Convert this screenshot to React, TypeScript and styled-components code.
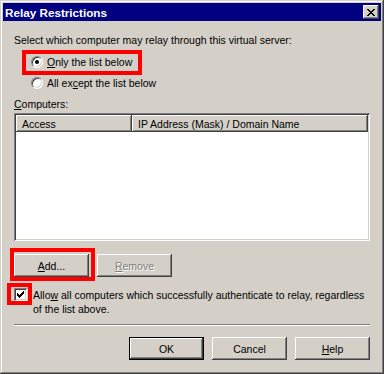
import React from 'react';
import styled, { createGlobalStyle, css } from 'styled-components';

const GlobalStyle = createGlobalStyle`
  html, body {
    margin: 0;
    padding: 0;
    background: #d4d0c8;
  }
  body {
    font-family: 'Liberation Sans', Arial, sans-serif;
    font-size: 10.5px;
    color: #000;
  }
`;

const raised = css`
  box-shadow: inset -1px -1px #404040, inset 1px 1px #fff, inset -2px -2px #808080, inset 2px 2px #d4d0c8;
`;

const Window = styled.div`
  position: relative;
  width: 384px;
  height: 374px;
  box-sizing: border-box;
  padding: 3px;
  background: #d4d0c8;
  box-shadow: inset -1px -1px #404040, inset 1px 1px #d4d0c8, inset -2px -2px #808080, inset 2px 2px #fff;
  display: flex;
  flex-direction: column;
`;

const TitleBar = styled.div`
  height: 18px;
  background: #000080;
  display: flex;
  align-items: center;
  justify-content: space-between;
  padding: 0 2px;
`;

const Title = styled.span`
  color: #fff;
  font-weight: bold;
  font-size: 11.7px;
  letter-spacing: 0;
`;

const CloseButton = styled.div`
  width: 16px;
  height: 14px;
  background: #d4d0c8;
  display: flex;
  align-items: center;
  justify-content: center;
  ${raised}
`;

const Content = styled.div`
  display: flex;
  flex-direction: column;
  padding: 0 11px;
`;

const Label = styled.div`
  line-height: 13px;
  margin-top: ${(p: { $mt: number }) => p.$mt}px;
  white-space: nowrap;
`;

const U = styled.span`
  text-decoration: underline;
  text-underline-offset: 1px;
`;

const RadioGroup = styled.div`
  display: flex;
  flex-direction: column;
  gap: 5px;
  margin: 7px 0 0 17px;
`;

const RadioRow = styled.div`
  position: relative;
  display: flex;
  align-items: center;
  gap: 4px;
  height: 16px;
  align-self: flex-start;
`;

const RadioCircle = styled.span`
  width: 12px;
  height: 12px;
  box-sizing: border-box;
  border-radius: 50%;
  border: 1px solid;
  border-color: #808080 #fff #fff #808080;
  background: #fff;
  box-shadow: inset 1px 1px 0 #404040, inset -1px -1px 0 #d4d0c8;
  display: flex;
  align-items: center;
  justify-content: center;
`;

const RadioDot = styled.span`
  width: 4px;
  height: 4px;
  border-radius: 50%;
  background: #000;
`;

const Highlight = styled.span<{ $l: number; $t: number; $w: number; $h: number }>`
  position: absolute;
  left: ${(p) => p.$l}px;
  top: ${(p) => p.$t}px;
  width: ${(p) => p.$w}px;
  height: ${(p) => p.$h}px;
  box-sizing: border-box;
  border: 4px solid #f00;
  pointer-events: none;
`;

const ListBox = styled.div`
  margin-top: 2px;
  height: 128px;
  background: #fff;
  box-sizing: border-box;
  padding: 2px;
  box-shadow: inset 1px 1px #808080, inset -1px -1px #fff, inset 2px 2px #404040, inset -2px -2px #d4d0c8;
`;

const HeaderRow = styled.div`
  display: flex;
  height: 17px;
`;

const HeaderCell = styled.div<{ $w?: number }>`
  ${(p) => (p.$w ? `width: ${p.$w}px;` : 'flex: 1;')}
  background: #d4d0c8;
  display: flex;
  align-items: center;
  padding-left: 6px;
  box-sizing: border-box;
  box-shadow: inset -1px -1px #404040, inset 1px 1px #fff, inset -2px -2px #808080;
`;

const ButtonRow = styled.div<{ $mt: number; $end?: boolean }>`
  display: flex;
  gap: 8px;
  margin-top: ${(p) => p.$mt}px;
  justify-content: ${(p) => (p.$end ? 'flex-end' : 'flex-start')};
`;

const Button = styled.div<{ $default?: boolean; $disabled?: boolean }>`
  position: relative;
  width: 75px;
  height: 23px;
  box-sizing: border-box;
  background: #d4d0c8;
  display: flex;
  align-items: center;
  justify-content: center;
  ${(p) =>
    p.$default
      ? 'box-shadow: inset 0 0 0 1px #000, inset -2px -2px #404040, inset 2px 2px #fff, inset -3px -3px #808080, inset 3px 3px #d4d0c8;'
      : 'box-shadow: inset -1px -1px #404040, inset 1px 1px #fff, inset -2px -2px #808080, inset 2px 2px #d4d0c8;'}
  color: ${(p) => (p.$disabled ? '#808080' : '#000')};
  text-shadow: ${(p) => (p.$disabled ? '1px 1px 0 #fff' : 'none')};
`;

const CheckRow = styled.div`
  position: relative;
  display: flex;
  align-items: flex-start;
  gap: 6px;
  margin-top: 11px;
`;

const CheckBox = styled.span`
  position: relative;
  flex: none;
  width: 13px;
  height: 13px;
  box-sizing: border-box;
  background: #fff;
  box-shadow: inset 1px 1px #808080, inset -1px -1px #fff, inset 2px 2px #404040, inset -2px -2px #d4d0c8;
  display: flex;
  align-items: center;
  justify-content: center;
`;

const CheckText = styled.div`
  line-height: 14px;
  white-space: nowrap;
`;

const Separator = styled.div`
  margin-top: 8px;
  height: 1px;
  background: #808080;
  border-bottom: 1px solid #fff;
`;

const AddWrap = styled.div`
  position: relative;
`;

const CloseGlyph = () => (
  <svg width="8" height="7" viewBox="0 0 8 7" shapeRendering="crispEdges">
    <path
      d="M0 0h2v1h-2zM6 0h2v1h-2zM1 1h2v1h-2zM5 1h2v1h-2zM2 2h4v1h-4zM3 3h2v1h-2zM2 4h4v1h-4zM1 5h2v1h-2zM5 5h2v1h-2zM0 6h2v1h-2zM6 6h2v1h-2z"
      fill="#000"
    />
  </svg>
);

const CheckGlyph = () => (
  <svg width="7" height="7" viewBox="0 0 7 7" shapeRendering="crispEdges">
    <path d="M6 0h1v1h-1zM5 1h2v1h-2zM0 2h1v1h-1zM4 2h3v1h-3zM0 3h2v1h-2zM3 3h3v1h-3zM0 4h5v1h-5zM1 5h3v1h-3zM2 6h1v1h-1z" fill="#000" />
  </svg>
);

const App = () => (
  <>
    <GlobalStyle />
    <Window>
      <TitleBar>
        <Title>Relay Restrictions</Title>
        <CloseButton>
          <CloseGlyph />
        </CloseButton>
      </TitleBar>
      <Content>
        <Label $mt={13}>Select which computer may relay through this virtual server:</Label>
        <RadioGroup>
          <RadioRow>
            <RadioCircle>
              <RadioDot />
            </RadioCircle>
            <span>
              <U>O</U>nly the list below
            </span>
            <Highlight $l={-9} $t={-4} $w={120} $h={25} />
          </RadioRow>
          <RadioRow>
            <RadioCircle />
            <span>
              All ex<U>c</U>ept the list below
            </span>
          </RadioRow>
        </RadioGroup>
        <Label $mt={7}>
          <U>C</U>omputers:
        </Label>
        <ListBox>
          <HeaderRow>
            <HeaderCell $w={116}>Access</HeaderCell>
            <HeaderCell>IP Address (Mask) / Domain Name</HeaderCell>
          </HeaderRow>
        </ListBox>
        <ButtonRow $mt={13}>
          <AddWrap>
            <Button>
              <span>
                <U>A</U>dd...
              </span>
            </Button>
            <Highlight $l={-4} $t={-6} $w={85} $h={33} />
          </AddWrap>
          <Button $disabled>
            <span>
              <U>R</U>emove
            </span>
          </Button>
        </ButtonRow>
        <CheckRow>
          <CheckBox>
            <CheckGlyph />
          </CheckBox>
          <CheckText>
            Allo<U>w</U> all computers which successfully authenticate to relay, regardless
            <br />
            of the list above.
          </CheckText>
          <Highlight $l={-7} $t={-5} $w={25} $h={22} />
        </CheckRow>
        <Separator />
        <ButtonRow $mt={11} $end>
          <Button $default>OK</Button>
          <Button>Cancel</Button>
          <Button>
            <span>
              <U>H</U>elp
            </span>
          </Button>
        </ButtonRow>
      </Content>
    </Window>
  </>
);

export default App;
